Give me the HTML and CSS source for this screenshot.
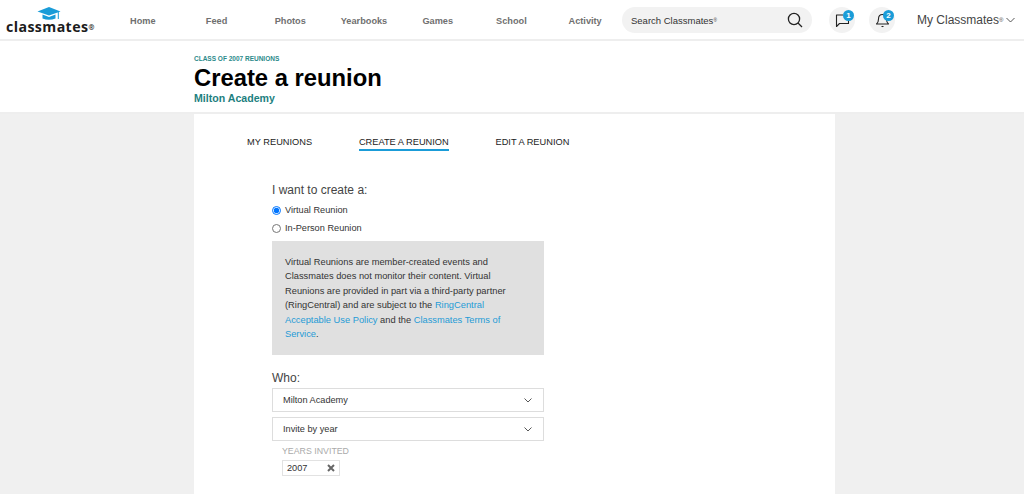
FILE: index.html
```html
<!DOCTYPE html>
<html>
  <head>
    <title>Create a reunion</title>
    <link rel="stylesheet" href="styles.css">
  </head>
  <body>
    <header class="topbar">
      <a class="logo">
        <svg class="logo-cap" width="24" height="14" viewBox="0 0 24 14">
          <path d="M12 0 L23.5 4.600 L12 8.600 L0.500 4.600 Z" fill="#1a9cd8"/>
          <path d="M5.500 7.600 L12 9.900 L18.500 7.600 L18.500 11.500 Q12 14 5.500 11.500 Z" fill="#1a9cd8"/>
          <rect x="20.800" y="5" width="1" height="7" fill="#1a9cd8"/>
        </svg>
        <span class="logo-text">classmates<sup>®</sup></span>
      </a>
      <nav class="nav">
        <a>Home</a>
        <a>Feed</a>
        <a>Photos</a>
        <a>Yearbooks</a>
        <a>Games</a>
        <a>School</a>
        <a>Activity</a>
      </nav>
      <div class="search">
        <span>Search Classmates<sup>®</sup></span>
        <svg width="16" height="16" viewBox="0 0 16 16" fill="none" stroke="#222" stroke-width="1.300">
          <circle cx="7" cy="7" r="5.600"/>
          <path d="M11 11 L15 15"/>
        </svg>
      </div>
      <div class="round-btn btn-chat">
        <svg width="15" height="15" viewBox="0 0 15 15" fill="none" stroke="#222" stroke-width="1.100">
          <path d="M8 2 H1.500 V13.500 L4.500 10.500 H13.500 V7" stroke-linejoin="round"/>
        </svg>
        <span class="badge">1</span>
      </div>
      <div class="round-btn btn-bell">
        <svg width="15" height="16" viewBox="0 0 15 16" fill="none" stroke="#222" stroke-width="1.100">
          <path d="M1.500 12 Q3.500 10.500 3.500 7 Q3.500 2.500 7.500 2.500 Q11.500 2.500 11.500 7 Q11.500 10.500 13.500 12 Z" stroke-linejoin="round"/>
          <path d="M6.500 14.500 H8.500"/>
        </svg>
        <span class="badge">2</span>
      </div>
      <div class="account">
        <span>My Classmates<sup>®</sup></span>
        <svg width="9" height="6" viewBox="0 0 9 6" fill="none" stroke="#444" stroke-width="0.900">
          <path d="M0.500 1 L4.500 5 L8.500 1"/>
        </svg>
      </div>
    </header>

    <section class="title-band">
      <div class="title-inner">
        <div class="eyebrow">CLASS OF 2007 REUNIONS</div>
        <h1>Create a reunion</h1>
        <div class="school">Milton Academy</div>
      </div>
    </section>

    <main class="page">
      <div class="column">
        <div class="tabs">
          <a>MY REUNIONS</a>
          <a class="active">CREATE A REUNION</a>
          <a>EDIT A REUNION</a>
        </div>
        <form class="reunion-form">
          <div class="form-label">I want to create a:</div>
          <label class="radio-row"><input type="radio" name="kind" checked> Virtual Reunion</label>
          <label class="radio-row"><input type="radio" name="kind"> In-Person Reunion</label>
          <div class="notice">
            Virtual Reunions are member-created events and Classmates does not monitor their content. Virtual Reunions are provided in part via a third-party partner (RingCentral) and are subject to the <a>RingCentral Acceptable Use Policy</a> and the <a>Classmates Terms of Service</a>.
          </div>
          <div class="form-label who">Who:</div>
          <div class="select">
            <span>Milton Academy</span>
            <svg width="8" height="5" viewBox="0 0 8 5" fill="none" stroke="#444" stroke-width="0.900"><path d="M0.500 0.500 L4 4 L7.500 0.500"/></svg>
          </div>
          <div class="select">
            <span>Invite by year</span>
            <svg width="8" height="5" viewBox="0 0 8 5" fill="none" stroke="#444" stroke-width="0.900"><path d="M0.500 0.500 L4 4 L7.500 0.500"/></svg>
          </div>
          <div class="years-label">YEARS INVITED</div>
          <div class="chip">
            <span>2007</span>
            <svg width="8" height="8" viewBox="0 0 8 8" fill="none" stroke="#666" stroke-width="2"><path d="M1 1 L7 7 M7 1 L1 7"/></svg>
          </div>
        </form>
      </div>
    </main>
  </body>
</html>
```

FILE: styles.css
```css
* {
  box-sizing: border-box;
}
html, body {
  height: 100%;
}
body {
  font-family: "Liberation Sans", Arial, sans-serif;
  margin: 0;
  padding: 0;
  background-color: #fff;
  color: #222;
  overflow: hidden;
  display: flex;
  flex-direction: column;
}
sup {
  font-size: 50%;
  line-height: 0;
  vertical-align: 2px;
}

/* top bar */
.topbar {
  height: 41px;
  flex: none;
  padding-top: 1px;
  display: flex;
  align-items: center;
  border-bottom: 2px solid #eee;
}
.logo {
  width: 106px;
  flex: none;
  padding-left: 6px;
  display: flex;
  flex-direction: column;
  align-items: flex-start;
}
.logo-cap {
  margin: 1px 0 -2px 31px;
  display: block;
}
.logo-text {
  font-family: "Open Sans", sans-serif;
  font-size: 14.200px;
  font-weight: 700;
  line-height: 15px;
  letter-spacing: 0.4px;
  color: #1c1c1c;
  white-space: nowrap;
}
.nav {
  width: 516px;
  flex: none;
  padding-top: 2px;
  display: grid;
  grid-template-columns: repeat(7, 1fr);
  font-size: 9.200px;
  font-weight: 700;
  color: #707070;
  text-align: center;
}
.search {
  width: 190px;
  height: 26px;
  flex: none;
  margin-right: 17px;
  padding: 0 9px;
  background-color: #f2f2f2;
  border-radius: 13px;
  display: flex;
  align-items: center;
  justify-content: space-between;
  font-size: 9.500px;
  color: #333;
}
.round-btn {
  position: relative;
  width: 26px;
  height: 26px;
  flex: none;
  border-radius: 50%;
  background-color: #f2f2f2;
  display: flex;
  align-items: center;
  justify-content: center;
}
.btn-chat {
  margin-right: 14px;
}
.btn-bell {
  margin-right: 22px;
}
.badge {
  position: absolute;
  top: 3px;
  right: 1px;
  width: 11px;
  height: 11px;
  border-radius: 50%;
  background-color: #1a9cd8;
  color: #fff;
  font-size: 8px;
  font-weight: 700;
  line-height: 11px;
  text-align: center;
}
.account {
  display: flex;
  align-items: center;
  gap: 3px;
  font-size: 12px;
  color: #444;
  white-space: nowrap;
}

/* page title */
.title-band {
  height: 73px;
  flex: none;
  padding-left: 194px;
  border-bottom: 2px solid #eee;
}
.title-inner {
  padding-top: 14px;
}
.eyebrow {
  font-size: 6.500px;
  font-weight: 700;
  line-height: 8px;
  color: #2b8a8a;
}
h1 {
  margin: 0;
  font-size: 23.800px;
  font-weight: 700;
  line-height: 29px;
  color: #000;
}
.school {
  font-size: 10.600px;
  font-weight: 700;
  line-height: 13px;
  color: #1d7f80;
}

/* main column */
.page {
  flex: 1;
  background-color: #f0f0f0;
  padding-left: 194px;
  min-height: 0;
}
.column {
  width: 641px;
  height: 100%;
  background-color: #fff;
  padding: 22px 53px 0;
}
.tabs {
  display: flex;
  gap: 46.800px;
  font-size: 9.250px;
  color: #222;
  line-height: 12px;
}
.tabs a {
  padding-bottom: 1px;
  border-bottom: 2px solid transparent;
}
.tabs a.active {
  border-bottom-color: #1a9cd8;
}
.reunion-form {
  width: 272px;
  margin-left: 25px;
  padding-top: 32px;
}
.form-label {
  font-size: 12px;
  line-height: 15px;
  color: #444;
}
.radio-row {
  display: flex;
  align-items: center;
  gap: 4px;
  height: 18px;
  font-size: 9.200px;
  color: #333;
}
.radio-row:first-of-type {
  margin-top: 3px;
}
.radio-row input {
  width: 9px;
  height: 9px;
  margin: 0;
}
.notice {
  margin-top: 4px;
  padding: 14px 25px 14px 13px;
  background-color: #e0e0e0;
  font-size: 9.300px;
  line-height: 14.400px;
  color: #333;
}
.notice a {
  color: #1f9bd6;
}
.who {
  margin-top: 16px;
}
.select {
  height: 24px;
  margin-top: 2px;
  margin-bottom: 5px;
  padding: 0 11px 0 10px;
  border: 1px solid #ddd;
  display: flex;
  align-items: center;
  justify-content: space-between;
  font-size: 9.200px;
  color: #333;
}
.years-label {
  margin: 5px 0 3px 10px;
  font-size: 8.800px;
  line-height: 11px;
  color: #aaa;
}
.chip {
  width: 58px;
  height: 16px;
  margin-left: 10px;
  padding: 0 4px;
  border: 1px solid #e2e2e2;
  display: flex;
  align-items: center;
  justify-content: space-between;
  font-size: 9.200px;
  color: #333;
}
```
